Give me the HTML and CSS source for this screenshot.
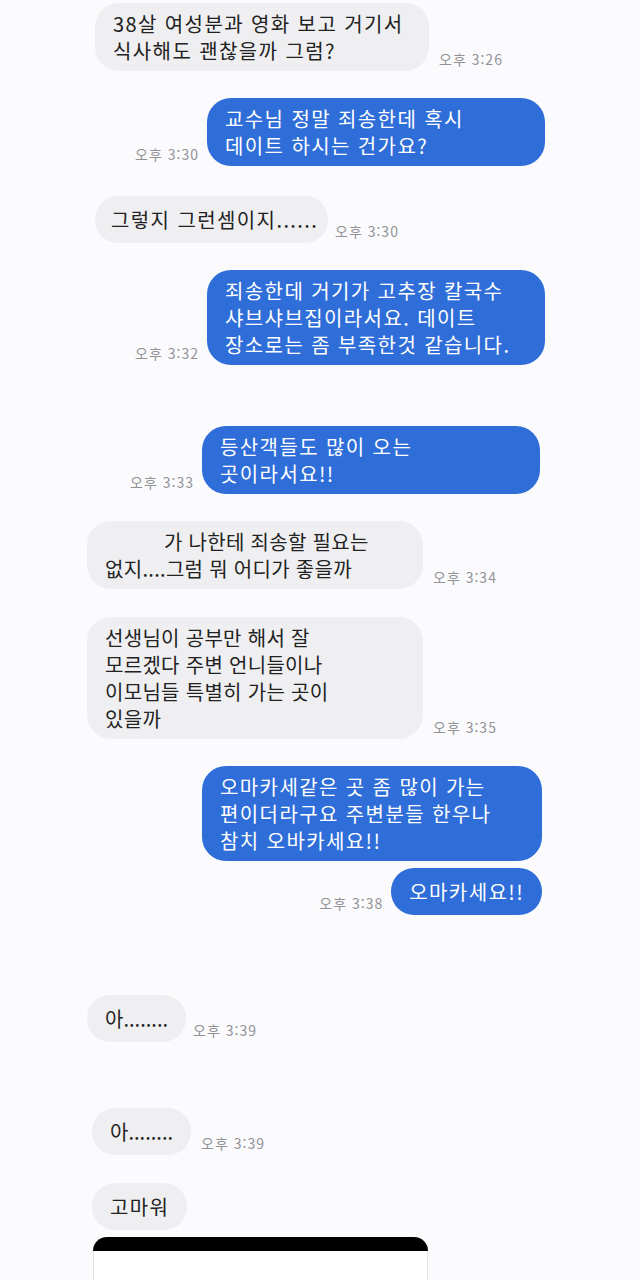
FILE: index.html
```html
<!DOCTYPE html>
<html lang="ko">
<head>
	<meta charset="UTF-8">
	<title>대화</title>
	<link rel="stylesheet" href="styles.css">
</head>
<body>
	<div class="chat">
		<div class="row in">
			<div class="bubble w-334">38살 여성분과 영화 보고 거기서<br>식사해도 괜찮을까 그럼?</div>
			<span class="time">오후 3:26</span>
		</div>
		<div class="row out">
			<span class="time">오후 3:30</span>
			<div class="bubble w-338">교수님 정말 죄송한데 혹시<br>데이트 하시는 건가요?</div>
		</div>
		<div class="row in shift gap-30">
			<div class="bubble short w-233">그렇지 그런셈이지......</div>
			<span class="time near">오후 3:30</span>
		</div>
		<div class="row out">
			<span class="time">오후 3:32</span>
			<div class="bubble w-338">죄송한데 거기가 고추장 칼국수<br>샤브샤브집이라서요. 데이트<br>장소로는 좀 부족한것 같습니다.</div>
		</div>
		<div class="row out far gap-61">
			<span class="time">오후 3:33</span>
			<div class="bubble w-338">등산객들도 많이 오는<br>곳이라서요!!</div>
		</div>
		<div class="row in edge">
			<div class="bubble small w-336"><span class="blank"></span>가 나한테 죄송할 필요는<br>없지....그럼 뭐 어디가 좋을까</div>
			<span class="time">오후 3:34</span>
		</div>
		<div class="row in edge gap-28">
			<div class="bubble small w-336">선생님이 공부만 해서 잘<br>모르겠다 주변 언니들이나<br>이모님들 특별히 가는 곳이<br>있을까</div>
			<span class="time">오후 3:35</span>
		</div>
		<div class="row out mid">
			<div class="bubble w-340">오마카세같은 곳 좀 많이 가는<br>편이더라구요 주변분들 한우나<br>참치 오바카세요!!</div>
		</div>
		<div class="row out mid gap-7">
			<span class="time">오후 3:38</span>
			<div class="bubble short">오마카세요!!</div>
		</div>
		<div class="row in edge gap-80">
			<div class="bubble short tight">아........</div>
			<span class="time near">오후 3:39</span>
		</div>
		<div class="row in nudge gap-66">
			<div class="bubble short tight">아........</div>
			<span class="time">오후 3:39</span>
		</div>
		<div class="row in nudge gap-28">
			<div class="bubble short">고마워</div>
		</div>
		<div class="card">
			<div class="card-top"></div>
			<div class="card-body"></div>
		</div>
	</div>
</body>
</html>
```

FILE: styles.css
```css
*{margin: 0; padding: 0; box-sizing: border-box;}
html, body{height: 100%;}
body{background: #fbfbfd; font-family: "Noto Sans CJK KR", "Noto Sans", sans-serif; color: #222; overflow: hidden;}

.chat{display: flex; flex-direction: column; padding-top: 3px;}

/* 한 줄 = 말풍선 + 시간 */
.row{display: flex; align-items: flex-end; margin-top: 27px;}
.row:first-child{margin-top: 0;}
.row.in{justify-content: flex-start; padding-left: 95px;}
.row.in.edge{padding-left: 87px;}
.row.in.nudge{padding-left: 92px;}
.row.out{justify-content: flex-end; padding-right: 95px;}
.row.out.far{padding-right: 100px;}
.row.out.mid{padding-right: 98px;}
.gap-7{margin-top: 7px;}
.gap-28{margin-top: 28px;}
.gap-30{margin-top: 30px;}
.gap-61{margin-top: 61px;}
.gap-66{margin-top: 66px;}
.gap-80{margin-top: 80px;}

.bubble{font-size: 20px; line-height: 27px; letter-spacing: 1.4px; padding: 7px 18px; border-radius: 24px; background: #efeff1; white-space: nowrap;}
.out .bubble{background: #2f6ed8; color: #fff;}
.bubble.short{padding: 10px 18px; border-radius: 23px;}
.bubble.small{letter-spacing: 0.3px;}
.bubble.tight{letter-spacing: 0;}
.in.shift .bubble{padding-left: 16px;}
.w-334{width: 334px;}
.w-336{width: 336px;}
.w-338{width: 338px;}
.w-340{width: 340px;}
.w-233{width: 233px;}
.blank{display: inline-block; width: 59px;}

.time{font-size: 14px; line-height: 16px; letter-spacing: 1px; color: #929296; margin-bottom: 4px; white-space: nowrap;}
.in .time{margin-left: 10px;}
.in .time.near{margin-left: 7px;}
.out .time{margin-right: 8px;}

.card{margin: 7px 0 0 93px; width: 335px;}
.card-top{height: 14px; background: #000; border-radius: 14px 14px 0 0;}
.card-body{height: 40px; background: #fff; border: 1px solid #e4e4e6; border-top: none;}
```
